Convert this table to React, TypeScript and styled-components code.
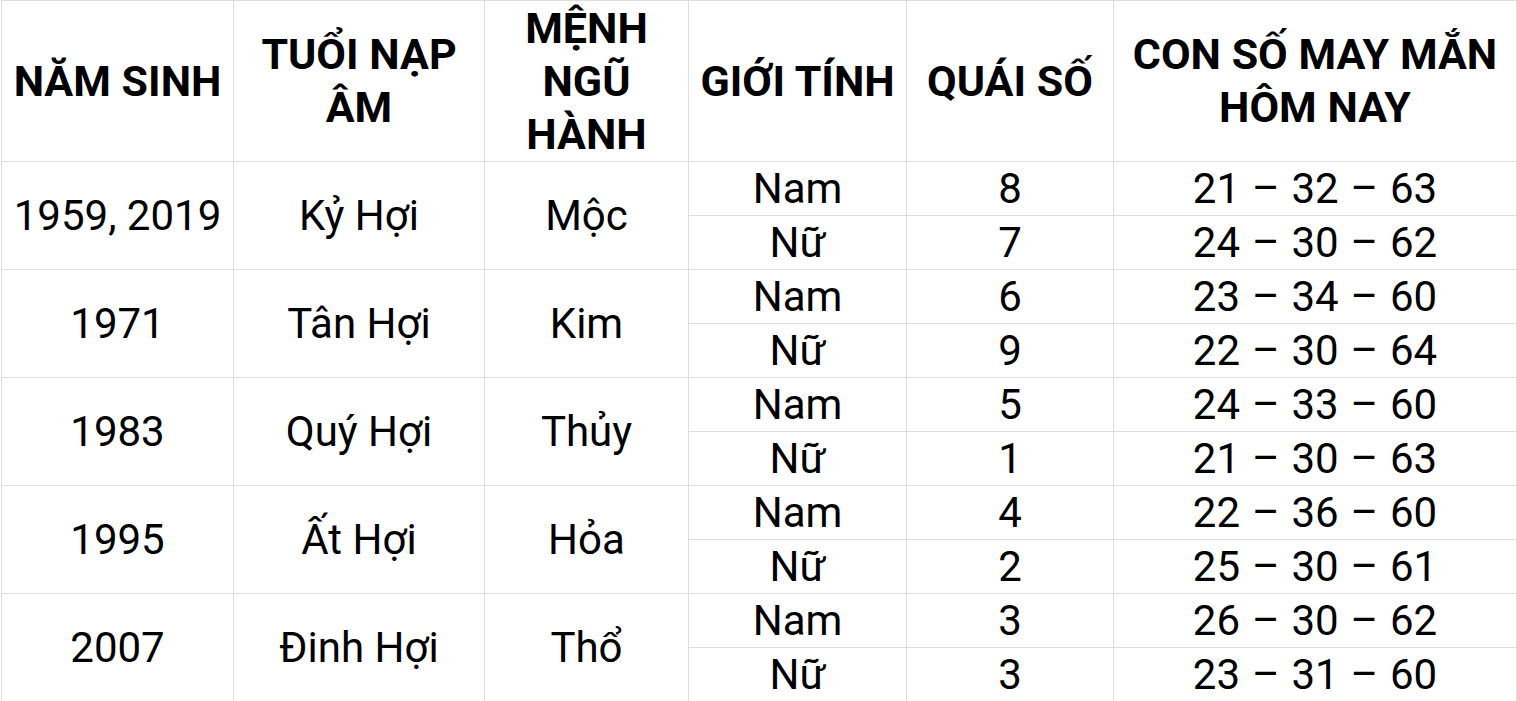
import styled, { createGlobalStyle } from "styled-components";

const GlobalStyle = createGlobalStyle`
  html, body {
    margin: 0;
    padding: 0;
    background: #fff;
  }
  body {
    font-family: Roboto, "Noto Sans", sans-serif;
    color: #000;
  }
`;

const Table = styled.table`
  border-collapse: collapse;
  table-layout: fixed;
  width: 1516px;
  margin: 0 0 0 1px;
  font-family: Roboto, "Noto Sans", sans-serif;
  color: #000;
`;

const HeadCell = styled.th`
  border: 1px solid #dedede;
  padding: 0;
  height: 160px;
  font-size: 43px;
  line-height: 53px;
  font-weight: 700;
  text-align: center;
  vertical-align: middle;
`;

const Cell = styled.td<{ $spaced?: boolean }>`
  border: 1px solid #dedede;
  padding: 0;
  height: 53px;
  font-size: 42px;
  line-height: 53px;
  font-weight: 400;
  text-align: center;
  vertical-align: middle;
  white-space: nowrap;
  word-spacing: ${({ $spaced }) => ($spaced ? "1.5px" : "normal")};
`;

type Person = { gender: string; quai: string; lucky: string };

type Group = {
  years: string;
  age: string;
  element: string;
  people: Person[];
};

const columns = [232, 251, 204, 218, 207, 403];

const headers = [
  "NĂM SINH",
  "TUỔI NẠP ÂM",
  "MỆNH NGŨ HÀNH",
  "GIỚI TÍNH",
  "QUÁI SỐ",
  "CON SỐ MAY MẮN HÔM NAY",
];

const groups: Group[] = [
  {
    years: "1959, 2019",
    age: "Kỷ Hợi",
    element: "Mộc",
    people: [
      { gender: "Nam", quai: "8", lucky: "21 – 32 – 63" },
      { gender: "Nữ", quai: "7", lucky: "24 – 30 – 62" },
    ],
  },
  {
    years: "1971",
    age: "Tân Hợi",
    element: "Kim",
    people: [
      { gender: "Nam", quai: "6", lucky: "23 – 34 – 60" },
      { gender: "Nữ", quai: "9", lucky: "22 – 30 – 64" },
    ],
  },
  {
    years: "1983",
    age: "Quý Hợi",
    element: "Thủy",
    people: [
      { gender: "Nam", quai: "5", lucky: "24 – 33 – 60" },
      { gender: "Nữ", quai: "1", lucky: "21 – 30 – 63" },
    ],
  },
  {
    years: "1995",
    age: "Ất Hợi",
    element: "Hỏa",
    people: [
      { gender: "Nam", quai: "4", lucky: "22 – 36 – 60" },
      { gender: "Nữ", quai: "2", lucky: "25 – 30 – 61" },
    ],
  },
  {
    years: "2007",
    age: "Đinh Hợi",
    element: "Thổ",
    people: [
      { gender: "Nam", quai: "3", lucky: "26 – 30 – 62" },
      { gender: "Nữ", quai: "3", lucky: "23 – 31 – 60" },
    ],
  },
];

const App = () => {
  return (
    <>
      <GlobalStyle />
      <Table>
        <colgroup>
          {columns.map((w, i) => (
            <col key={i} style={{ width: w }} />
          ))}
        </colgroup>
        <thead>
          <tr>
            {headers.map((h) => (
              <HeadCell key={h}>{h}</HeadCell>
            ))}
          </tr>
        </thead>
        <tbody>
          {groups.map((g) =>
            g.people.map((p, i) => (
              <tr key={g.years + p.gender}>
                {i === 0 && (
                  <>
                    <Cell rowSpan={g.people.length}>{g.years}</Cell>
                    <Cell rowSpan={g.people.length}>{g.age}</Cell>
                    <Cell rowSpan={g.people.length}>{g.element}</Cell>
                  </>
                )}
                <Cell>{p.gender}</Cell>
                <Cell>{p.quai}</Cell>
                <Cell $spaced>{p.lucky}</Cell>
              </tr>
            ))
          )}
        </tbody>
      </Table>
    </>
  );
};

export default App;
